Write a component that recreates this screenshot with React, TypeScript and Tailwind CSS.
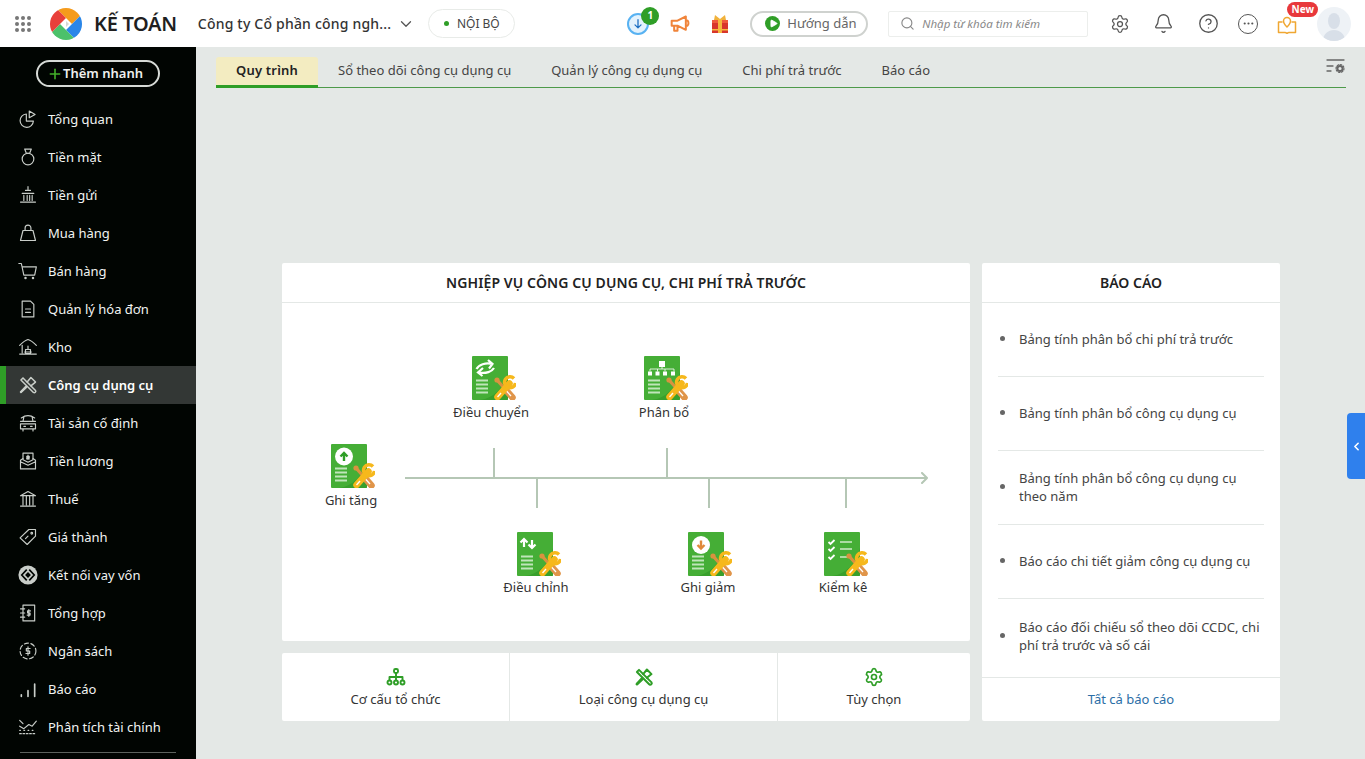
import React from "react";
import { Bell, ChevronDown, ChevronLeft, CircleHelp, Ellipsis, Play, Plus, Search, Settings } from "lucide-react";

const S = { fill: "none", stroke: "currentColor", strokeWidth: 1.5, strokeLinecap: "round", strokeLinejoin: "round" } as const;

const toolsPaths = (
  <>
    <path d="M3.500 6 6 3.500 21 18.500a1.800 1.800 0 0 1-2.500 2.500Z" />
    <path d="M10 13.500 3.500 20l.5.500 6.500-6.500" />
    <path d="M9 14 3 20.500 3.500 21 10 15" />
    <path d="M11 8.500 15.500 3 21 8.500 15.500 13" />
  </>
);

const Tools = ({ cls = "" }: { cls?: string }) => (
  <svg viewBox="0 0 24 24" className={cls} {...S} strokeWidth={2.400}>{toolsPaths}</svg>
);

const sideIcons: Record<string, React.ReactNode> = {
  "Tổng quan": <><path d="M10 6a8 8 0 1 0 8.500 8.500H10Z" /><path d="M13.500 2.500v8l7-4Z" /></>,
  "Tiền mặt": <><path d="M8 2.500h8l-2 5h-4Z" /><circle cx="12" cy="14.500" r="7" /></>,
  "Tiền gửi": <><path d="M12 2v3M9 6.500h6M5 10h14M7 12.500v6M11 12.500v6M14 12.500v6M17 12.500v6M3 20.500h18" /></>,
  "Mua hàng": <><path d="M6 9h12l3 12H3Z" /><path d="M8.500 9V6a3.500 3.500 0 0 1 7 0v3" /></>,
  "Bán hàng": <><path d="M1 3h3l3 14h13l2-10H5" /><circle cx="9" cy="20.500" r=".8" /><circle cx="18" cy="20.500" r=".8" /></>,
  "Quản lý hóa đơn": <><path d="M5 2.500h10l4 4v15H5Z" /><path d="M9 12h6M9 16h6" /></>,
  Kho: <><path d="M2 10c3-3 6-6 10-7 4 1 7 4 10 7" /><path d="M5 10v9M2 20.500h20M9 15h6v5H9ZM12 11v4M8 18h8" /></>,
  "Công cụ dụng cụ": <g strokeWidth={1.800}>{toolsPaths}</g>,
  "Tài sản cố định": <><path d="M4 6c5-3.500 11-3.500 16 0M7 5l-1 5M17 5l1 5M3 10h18M3 13h18v6H3ZM6 19v2.500M18 19v2.500M7 16h2M15 16h2" /></>,
  "Tiền lương": <><path d="M6 2.500h12v8l-6 3-6-3Z" /><path d="M6 9 3 11v10.500h18V11l-3-2M3 13l9 4 9-4" /><path d="M12 5v5M10.500 6.500h3v1.500h-3v1.500h3" /></>,
  "Thuế": <><path d="M3 8 12 3l9 5ZM6 8v11M10 8v11M14 8v11M18 8v11M3 20.500h18" /></>,
  "Giá thành": <><path d="M2.500 13 13 3h8v8L11 21Z" /><circle cx="16.500" cy="7.500" r="1" /><path d="m9 14 3-3" /></>,
  "Tổng hợp": <><path d="M6 2.500h14v19H6ZM3 7h5M3 12h5M3 17h5" /><path d="M13 8v8M15 9.500h-3.500v2.500h3v2.500H11" /></>,
  "Ngân sách": <><circle cx="12" cy="12" r="9.500" strokeDasharray="5 3" /><path d="M12 7v10M14.500 9h-4.500v3h4v3h-4.500" /></>,
  "Báo cáo": <><path d="M4 19v2M12 14v7M20 6v15" strokeWidth="2" /></>,
  "Phân tích tài chính": <><path d="M2 11l5 3 6-5 4 2 5-6M2 4l4 4" /><path d="M2 20h20M2 16h1M7 16h1M12 16h1M17 16h1" strokeDasharray="2 2" /></>,
};

const items = ["Tổng quan","Tiền mặt","Tiền gửi","Mua hàng","Bán hàng","Quản lý hóa đơn","Kho","Công cụ dụng cụ","Tài sản cố định","Tiền lương","Thuế","Giá thành","Kết nối vay vốn","Tổng hợp","Ngân sách","Báo cáo","Phân tích tài chính"];

function SideIcon({ name }: { name: string }) {
  if (name === "Kết nối vay vốn")
    return (
      <svg viewBox="0 0 24 24" className="h-[20px] w-[20px] text-[#c9cec9]">
        <circle cx="12" cy="12" r="11.500" fill="currentColor" />
        <path d="M10.500 5.500 4.500 12l6 6.500M13.500 5.500l6 6.500-6 6.500" fill="none" stroke="#010502" strokeWidth="2" />
        <path d="M12 8.500 15.500 12 12 15.500 8.500 12Z" fill="#010502" />
      </svg>
    );
  return <svg viewBox="0 0 24 24" className="h-[20px] w-[20px] text-[#c9cec9]" {...S} strokeWidth={1.400}>{sideIcons[name]}</svg>;
}

function Sidebar() {
  return (
    <aside className="flex w-[196px] shrink-0 flex-col bg-[#010502]">
      <div className="flex h-[53px] shrink-0 items-start justify-center pt-[13px]">
        <button className="flex h-[27px] w-[124px] items-center justify-center rounded-full border-2 border-[#d6dad6] pr-[6px] text-[13px] font-semibold text-[#eef0ee]">
          <Plus className="h-[16px] w-[16px] text-[#43b02a]" strokeWidth={2.400} />
          Thêm nhanh
        </button>
      </div>
      <nav className="flex flex-col">
        {items.map((n) => {
          const active = n === "Công cụ dụng cụ";
          return (
            <div key={n} className={`flex h-[38px] items-center ${active ? "border-l-[6px] border-[#2f9e27] bg-[#333735] pl-[12px] font-semibold text-white" : "pl-[18px] text-[#f2f4f2]"} text-[13px]`}>
              <SideIcon name={n} />
              <span className="ml-[10px] mt-[2px]">{n}</span>
            </div>
          );
        })}
      </nav>
      <div className="mx-[20px] mt-[6px] border-t border-[#5d625e]" />
    </aside>
  );
}

function Logo() {
  return (
    <svg viewBox="0 0 32 32" className="ml-[19px] h-[32px] w-[32px]">
      <defs><clipPath id="logo-clip"><circle cx="16" cy="16" r="16" /></clipPath></defs>
      <g clipPath="url(#logo-clip)">
        <path d="M16 16 16 10 6 0H32V6L22 16Z" fill="#f59b1c" />
        <path d="M16 16 22 16 32 6V32H26L16 22Z" fill="#2a86e8" />
        <path d="M16 16 16 22 26 32H0V26L10 16Z" fill="#4cc16a" />
        <path d="M16 16 10 16 0 26V0H6L16 10Z" fill="#e8403a" />
      </g>
      <path d="M16 10 22 16 16 22 10 16Z" fill="#fff" />
      <path d="M16 13 19 16 16 19Z" fill="#d5d8d5" />
    </svg>
  );
}

function Header() {
  return (
    <header className="flex h-[47px] shrink-0 items-center bg-white text-[#333]">
      <div className="ml-[15px] grid h-[16px] w-[16px] grid-cols-3 gap-[2px]">
        {Array.from({ length: 9 }).map((_, i) => <span key={i} className="rounded-full bg-[#777]" />)}
      </div>
      <Logo />
      <span className="ml-[12px] text-[20px] font-semibold tracking-[-0.3px] text-[#1f1f1f]">KẾ TOÁN</span>
      <span className="ml-[21px] text-[14px] font-medium tracking-[0.2px]">Công ty Cổ phần công ngh...</span>
      <ChevronDown className="ml-[6px] h-[18px] w-[18px] text-[#555]" strokeWidth={1.700} />
      <div className="ml-[13px] flex h-[29px] w-[87px] items-center justify-center gap-[8px] rounded-full border border-[#e8ebe8] text-[12px] text-[#444]">
        <span className="h-[5px] w-[5px] rounded-full bg-[#2f9e27]" />
        NỘI BỘ
      </div>
      <div className="relative ml-[112px] flex h-[22px] w-[22px] items-center justify-center rounded-full border-2 border-[#58b2f2] bg-[#e3f2fd]">
        <svg viewBox="0 0 14 14" className="h-[12px] w-[12px] text-[#1f6fc2]" {...S}><path d="M7 2v9M3.500 8 7 11.500 10.500 8" /></svg>
        <span className="absolute -right-[12px] -top-[8px] flex h-[18px] w-[18px] items-center justify-center rounded-full bg-[#2f9e27] text-[10px] font-bold text-white">1</span>
      </div>
      <svg viewBox="0 0 24 24" className="ml-[21px] h-[20px] w-[20px] text-[#f0843a]" {...S} strokeWidth={2.400}><path d="M2 8h7l10-5v16L9 14H2ZM5 14v6h4v-6M21 8c1.500 1 1.500 5 0 6" /></svg>
      <svg viewBox="0 0 20 20" className="ml-[20px] h-[20px] w-[20px]">
        <path d="M5 1l5 4 5-4 1 5H4Z" fill="#f1b23c" />
        <rect x="2" y="6" width="16" height="13" fill="#d8352c" />
        <rect x="2" y="6" width="16" height="3" fill="#ef5a3c" />
        <rect x="8" y="5" width="4" height="14" fill="#f5b83d" />
        <rect x="2" y="15" width="16" height="1.500" fill="#f5b83d" />
      </svg>
      <div className="ml-[20px] flex h-[26px] w-[118px] items-center rounded-full border-2 border-[#cfd2cf] pl-[13px] text-[13px] text-[#666]">
        <span className="flex h-[15px] w-[15px] items-center justify-center rounded-full bg-[#2f9e27]">
          <Play className="ml-[1px] h-[9px] w-[9px] fill-white text-white" />
        </span>
        <span className="ml-[7px]">Hướng dẫn</span>
      </div>
      <div className="ml-[20px] flex h-[26px] w-[200px] items-center rounded-[2px] border border-[#eceeec] pl-[11px] text-[#888]">
        <Search className="h-[15px] w-[15px]" strokeWidth={1.800} />
        <span className="ml-[7px] text-[11.5px] italic">Nhập từ khóa tìm kiếm</span>
      </div>
      <Settings className="ml-[22px] h-[20px] w-[20px] text-[#555]" strokeWidth={1.500} />
      <Bell className="ml-[23px] h-[21px] w-[21px] text-[#555]" strokeWidth={1.500} />
      <CircleHelp className="ml-[24px] h-[21px] w-[21px] text-[#555]" strokeWidth={1.500} />
      <div className="ml-[19px] flex h-[20px] w-[20px] items-center justify-center rounded-full border-[1.5px] border-[#555]">
        <Ellipsis className="h-[13px] w-[13px] text-[#555]" />
      </div>
      <div className="relative ml-[19px] h-[20px] w-[20px]">
        <svg viewBox="0 0 20 20" className="h-[20px] w-[20px] text-[#f0a732]" {...S}>
          <path d="M5 8H1.500v10.500H8c1 0 1.500.5 2 1 .5-.5 1-1 2-1h6.500V8H15" />
          <path d="M10 13c-2-2-3.500-3.500-3.500-6a3.500 3.500 0 0 1 7 0c0 2.500-1.500 4-3.500 6Z" />
        </svg>
        <span className="absolute -top-[12px] left-[10px] flex h-[15px] w-[31px] items-center justify-center rounded-full bg-[#e8383b] text-[10px] font-bold text-white">New</span>
      </div>
      <div className="ml-[20px] flex h-[34px] w-[34px] items-end justify-center overflow-hidden rounded-full bg-[#eef2f6]">
        <svg viewBox="0 0 34 34" className="h-[34px] w-[34px]"><ellipse cx="17" cy="14" rx="6" ry="8" fill="#d8dfe8" /><path d="M6 34c0-7 5-11 11-11s11 4 11 11Z" fill="#d8dfe8" /></svg>
      </div>
    </header>
  );
}

const tabs = ["Quy trình", "Sổ theo dõi công cụ dụng cụ", "Quản lý công cụ dụng cụ", "Chi phí trả trước", "Báo cáo"];

function Tabs() {
  return (
    <div className="ml-[20px] mr-[19px] mt-[10px] flex h-[31px] items-stretch justify-between border-b border-[#4d9a4a]">
      <div className="flex">
        {tabs.map((t, i) => (
          <div key={t} className={i === 0 ? "-mb-[1px] flex w-[102px] items-center justify-center rounded-t-[3px] border-b-[3px] border-[#2f9e27] bg-[#f3ecc1] text-[13px] font-semibold tracking-[0.2px] text-[#222]" : "flex items-center px-[20px] pb-[3px] text-[13px] text-[#444]"}>
            {t}
          </div>
        ))}
      </div>
      <svg viewBox="0 0 20 20" className="mb-[9px] h-[20px] w-[20px] text-[#666]" {...S} strokeWidth={1.300}>
        <path d="M1 3h17M1 9h6M1 14h4" />
        <circle cx="14" cy="11.500" r="2.600" strokeWidth={2} /><circle cx="14" cy="11.500" r="4" strokeDasharray="1.500 1.600" strokeWidth={1.200} />
      </svg>
    </div>
  );
}

const DocGlyphs: Record<string, React.ReactNode> = {
  tang: <><circle cx="13" cy="12.500" r="9" fill="#fff" /><path d="M13 17v-8M9.500 12.500 13 9l3.500 3.500" stroke="#2f9e27" strokeWidth="2.400" fill="none" /></>,
  chuyen: <><path d="M4.500 13c2-4 9-7 16-5M16 4l4.500 4-3.500 4.500" stroke="#fff" strokeWidth="2.200" fill="none" /><path d="M22 12c-2 3.500-8 6-15 4.500M11 12 6 16.500l4.500 3.500" stroke="#fff" strokeWidth="2.200" fill="none" /></>,
  bo: <><rect x="15" y="5" width="6" height="6" fill="#fff" /><path d="M18 11v2M6 15.500v-2.500h24v2.500M13.500 13v2.500M21 13v2.500" stroke="#fff" strokeWidth=".8" fill="none" /><path d="M4 15.500h4v4H4ZM11.500 15.500h4v4h-4ZM19 15.500h4v4h-4ZM27 15.500h4v4h-4Z" fill="#fff" /></>,
  chinh: <><path d="M7 15V7M3.500 10.500 7 7l3.500 3.500" stroke="#fff" strokeWidth="2.200" fill="none" /><path d="M15 8v8M11.500 12.500 15 16l3.500-3.500" stroke="#fff" strokeWidth="2.200" fill="none" /></>,
  giam: <><circle cx="13" cy="13" r="9" fill="#fff" /><path d="M13 8.500v8M9.500 13l3.500 3.500 3.500-3.500" stroke="#e0893a" strokeWidth="2.400" fill="none" /></>,
  kiem: <><path d="M4.500 10l2 2 4-4M4.500 17l2 2 4-4M4.500 25l2 2 4-4" stroke="#fff" strokeWidth="1.800" fill="none" /><path d="M16 10h12M16 17h12M16 25h8" stroke="#cdeac6" strokeWidth="1.600" /></>,
};

function DocIcon({ kind }: { kind: string }) {
  return (
    <svg viewBox="0 0 44 44" className="h-[44px] w-[44px]">
      <path d="M1 0h34a1 1 0 0 1 1 1v42a1 1 0 0 1-1 1H1a1 1 0 0 1-1-1V1a1 1 0 0 1 1-1Z" fill="#45ae36" />
      <path d="M36 16 36 43a1 1 0 0 1-1 1H8c14-2 24-12 28-28Z" fill="#389f2c" />
      {DocGlyphs[kind]}
      {kind !== "kiem" && <path d="M4 24.500h12M4 28.500h12M4 32.500h12M4 36.500h12" stroke="#c0e5ba" strokeWidth="1.800" />}
      <path d="M25 24 33 33" stroke="#d9923f" strokeWidth="3.200" strokeLinecap="round" />
      <circle cx="25" cy="24" r="2.600" fill="#d9923f" />
      <path d="M33 33 40.500 41.500" stroke="#e0954a" strokeWidth="6.500" strokeLinecap="round" />
      <path d="M34.500 35 39 40" stroke="#fff" strokeWidth="1.300" />
      <path d="M25.500 41 37.500 27.500" stroke="#f6b81c" strokeWidth="6.500" strokeLinecap="round" />
      <path d="M42 22.500a5.500 5.500 0 1 0 1.500 4.500" fill="none" stroke="#f6b81c" strokeWidth="3.500" />
      <path d="M25.500 41 29 37" stroke="#fff" strokeWidth="1.300" />
    </svg>
  );
}

const nodes = [
  { k: "chuyen", l: "Điều chuyển", x: 190, y: 53, lx: 209, ly: 100 },
  { k: "bo", l: "Phân bổ", x: 362, y: 53, lx: 382, ly: 100 },
  { k: "tang", l: "Ghi tăng", x: 49, y: 141, lx: 69, ly: 188 },
  { k: "chinh", l: "Điều chỉnh", x: 235, y: 229, lx: 254, ly: 275 },
  { k: "giam", l: "Ghi giảm", x: 406, y: 229, lx: 426, ly: 275 },
  { k: "kiem", l: "Kiểm kê", x: 542, y: 229, lx: 561, ly: 275 },
];

function Diagram() {
  return (
    <div className="relative flex-1">
      <div className="absolute left-[123px] top-[174px] h-[2px] w-[522px] bg-[#b5c7b5]" />
      <svg viewBox="0 0 10 12" className="absolute left-[637px] top-[169px] h-[12px] w-[10px] text-[#b5c7b5]" {...S} strokeWidth={2}><path d="M3 1l5 5-5 5" /></svg>
      <div className="absolute left-[211px] top-[145px] h-[30px] w-[2px] bg-[#b5c7b5]" />
      <div className="absolute left-[384px] top-[145px] h-[30px] w-[2px] bg-[#b5c7b5]" />
      <div className="absolute left-[254px] top-[175px] h-[30px] w-[2px] bg-[#b5c7b5]" />
      <div className="absolute left-[426px] top-[175px] h-[30px] w-[2px] bg-[#b5c7b5]" />
      <div className="absolute left-[563px] top-[175px] h-[30px] w-[2px] bg-[#b5c7b5]" />
      {nodes.map((n) => (
        <React.Fragment key={n.l}>
          <div className="absolute" style={{ left: n.x, top: n.y }}><DocIcon kind={n.k} /></div>
          <span className="absolute -translate-x-1/2 whitespace-nowrap text-[13px] leading-[18px] text-[#333]" style={{ left: n.lx, top: n.ly }}>{n.l}</span>
        </React.Fragment>
      ))}
    </div>
  );
}

const reports = [
  { t: "Bảng tính phân bổ chi phí trả trước", h: "h-[74px] pb-[2px]" },
  { t: "Bảng tính phân bổ công cụ dụng cụ", h: "h-[74px] pb-[2px]" },
  { t: "Bảng tính phân bổ công cụ dụng cụ theo năm", h: "h-[74px] pb-[2px]" },
  { t: "Báo cáo chi tiết giảm công cụ dụng cụ", h: "h-[74px] pb-[2px]" },
  { t: "Báo cáo đối chiếu sổ theo dõi CCDC, chi phí trả trước và số cái", h: "h-[78px] pb-[5px]" },
];

function Shortcut({ w, label, children, border }: { w: string; label: string; children: React.ReactNode; border?: boolean }) {
  return (
    <div className={`flex ${w} flex-col items-center pt-[14px] ${border ? "border-r border-[#e4e8e6]" : ""}`}>
      {children}
      <span className="mt-[3px] text-[13px] leading-[18px] text-[#333]">{label}</span>
    </div>
  );
}

export default function App() {
  return (
    <div className="flex h-[759px] w-[1365px] flex-col overflow-hidden bg-[#e4e8e6] [font-family:'Noto_Sans',sans-serif]">
      <Header />
      <div className="flex min-h-0 flex-1">
        <Sidebar />
        <main className="relative min-w-0 flex-1">
          <Tabs />
          <div className="ml-[86px] mt-[175px] flex gap-[12px]">
            <div className="flex w-[688px] flex-col gap-[12px]">
              <section className="flex h-[378px] flex-col rounded-[2px] bg-white">
                <h2 className="flex h-[40px] shrink-0 items-center justify-center border-b border-[#e4e8e6] text-[14px] font-semibold tracking-[0.11px] text-[#222]">NGHIỆP VỤ CÔNG CỤ DỤNG CỤ, CHI PHÍ TRẢ TRƯỚC</h2>
                <Diagram />
              </section>
              <div className="flex h-[68px] rounded-[2px] bg-white">
                <Shortcut w="w-[228px]" label="Cơ cấu tổ chức" border>
                  <svg viewBox="0 0 20 20" className="h-[20px] w-[20px] text-[#2f9e27]" {...S} strokeWidth={1.900}>
                    <rect x="8" y="2" width="4" height="4" rx="1.500" /><path d="M10 6v4M3.500 13v-3h13v3M10 10v3" />
                    <circle cx="3.500" cy="15.500" r="2" /><circle cx="10" cy="15.500" r="2" /><circle cx="16.500" cy="15.500" r="2" />
                  </svg>
                </Shortcut>
                <Shortcut w="w-[268px]" label="Loại công cụ dụng cụ" border>
                  <Tools cls="h-[20px] w-[20px] text-[#2f9e27]" />
                </Shortcut>
                <Shortcut w="w-[192px]" label="Tùy chọn">
                  <Settings className="h-[20px] w-[20px] text-[#2f9e27]" strokeWidth={2} />
                </Shortcut>
              </div>
            </div>
            <aside className="flex h-[458px] w-[298px] flex-col rounded-[2px] bg-white">
              <h2 className="flex h-[40px] shrink-0 items-center justify-center border-b border-[#e4e8e6] text-[14px] font-semibold text-[#222]">BÁO CÁO</h2>
              <ul className="mx-[16px] flex flex-col">
                {reports.map((r, i) => (
                  <li key={r.t} className={`flex ${r.h} items-center ${i < 4 ? "border-b border-[#e4e8e6]" : ""}`}>
                    <span className="ml-[2px] h-[5px] w-[5px] shrink-0 rounded-full bg-[#666]" />
                    <span className="ml-[14px] text-[13px] leading-[18px] text-[#444]">{r.t}</span>
                  </li>
                ))}
              </ul>
              <div className="flex flex-1 items-center justify-center border-t border-[#e4e8e6] text-[13px] text-[#2b6ea6]">Tất cả báo cáo</div>
            </aside>
          </div>
          <button className="absolute right-0 top-[366px] flex h-[66px] w-[18px] items-center justify-center rounded-l-[4px] bg-[#2f80ed] text-white">
            <ChevronLeft className="h-[13px] w-[13px]" strokeWidth={3} />
          </button>
        </main>
      </div>
    </div>
  );
}
